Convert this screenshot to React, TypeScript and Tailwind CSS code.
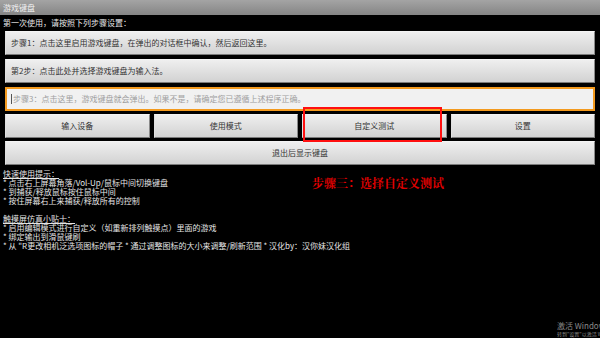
const FONT = { fontFamily: '"Noto Sans CJK SC", "Noto Sans", sans-serif' };

const TIPS_QUICK = [
  "* 点击右上屏幕角落/Vol-Up/鼠标中间切换键盘",
  "* 到捕获/释放鼠标按住鼠标中间",
  "* 按住屏幕右上来捕获/释放所有的控制",
];

const TIPS_TOUCH = [
  "* 启用编辑模式进行自定义（如重新排列触摸点）里面的游戏",
  "* 绑定输出到滑鼠键刷",
  "* 从 \"R更改相机泛选项图标的帽子 * 通过调整图标的大小来调整/刷新范围 * 汉化by：汉你妹汉化组",
];

function GrayButton({ children, center }: { children: React.ReactNode; center?: boolean }) {
  return (
    <div
      className={`flex h-[24px] items-center border border-t-[#f4f4f4] border-l-[#e0e0e0] border-r-[#8a8a8a] border-b-[#7a7a7a] bg-gradient-to-b from-[#efefef] to-[#d2d2d2] text-[8px] text-[#333] ${
        center ? "justify-center" : "px-[5px]"
      }`}
    >
      {children}
    </div>
  );
}

export default function App() {
  return (
    <div className="relative h-[338px] w-[600px] overflow-hidden bg-black" style={FONT}>
      <div className="flex h-[15px] items-center bg-gradient-to-b from-[#a4a4a4] to-[#858585] px-[3px] text-[8px] text-[#f2f2f2]">
        游戏键盘
      </div>
      <div className="flex h-[16px] items-center pl-[3px] text-[8px] text-[#e8e8e8]">
        第一次使用，请按照下列步骤设置：
      </div>

      <div className="flex flex-col px-[5px]">
        <GrayButton>步骤1：点击这里启用游戏键盘，在弹出的对话框中确认，然后返回这里。</GrayButton>
        <div className="mt-[4px]">
          <GrayButton>第2步：点击此处并选择游戏键盘为输入法。</GrayButton>
        </div>
        <div className="mt-[4px] flex h-[24px] items-center border-2 border-[#f39a1e] bg-[#f1f1f1] px-[4px] text-[8px] text-[#a0a0a0]">
          <span className="mr-[1px] h-[10px] w-px bg-[#555]" />
          步骤3：点击这里，游戏键盘就会弹出。如果不是，请确定您已遵循上述程序正确。
        </div>
        <div className="mt-[3px] grid grid-cols-4 gap-[4px]">
          <GrayButton center>输入设备</GrayButton>
          <GrayButton center>使用模式</GrayButton>
          <GrayButton center>自定义测试</GrayButton>
          <GrayButton center>设置</GrayButton>
        </div>
        <div className="mt-[3px]">
          <GrayButton center>退出后显示键盘</GrayButton>
        </div>
      </div>

      <div className="mt-[4px] pl-[3px] text-[8px] leading-[9px] text-[#e4e4e4]">
        <p className="underline">快速使用提示：</p>
        {TIPS_QUICK.map((t) => (
          <p key={t}>{t}</p>
        ))}
        <p className="h-[9px]" />
        <p className="underline">触摸屏仿真小贴士：</p>
        {TIPS_TOUCH.map((t) => (
          <p key={t}>{t}</p>
        ))}
      </div>

      {/* annotation overlay */}
      <div className="pointer-events-none absolute left-[303px] top-[107px] h-[35px] w-[139px] border-2 border-[#ff1010]" />
      <div
        className="absolute left-[312px] top-[175px] text-[12px] font-bold leading-[16px] text-[#e00000]"
        style={{ fontFamily: '"Noto Serif CJK SC", "Noto Sans CJK SC", serif' }}
      >
        步骤三：选择自定义测试
      </div>

      <div className="absolute left-[557px] top-[321px] whitespace-nowrap text-[#8a8a8a]">
        <div className="text-[8px] leading-[10px]">激活 Windows</div>
        <div className="text-[5px] leading-[6px]">转到"设置"以激活 Windows。</div>
      </div>
    </div>
  );
}
